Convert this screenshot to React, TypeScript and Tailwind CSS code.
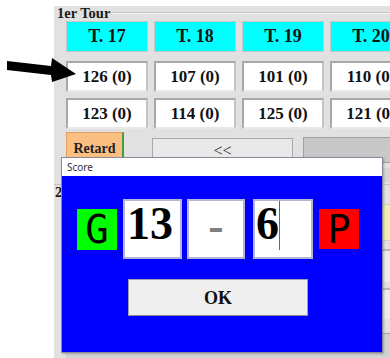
import React from "react";

const serif = "font-['Liberation_Serif','Times_New_Roman',serif]";

function HeadCell({ label }: { label: string }) {
  return (
    <div className="h-[31px] bg-[#00ffff] border border-[#c8c8c8] flex items-center justify-center text-[18px] font-bold text-[#111] leading-none">
      {label}
    </div>
  );
}

function ValCell({ label }: { label: string }) {
  return (
    <div className="h-[31px] bg-white border-2 border-t-[#a8a8a8] border-l-[#a8a8a8] border-r-[#c4c4c4] border-b-[#e8e8e8] flex items-center justify-center text-[17px] font-bold text-[#111] leading-none">
      {label}
    </div>
  );
}

export default function App() {
  const heads = ["T. 17", "T. 18", "T. 19", "T. 20"];
  const row1 = ["126 (0)", "107 (0)", "101 (0)", "110 (0)"];
  const row2 = ["123 (0)", "114 (0)", "125 (0)", "121 (0)"];
  return (
    <div className={`relative w-[390px] h-[358px] overflow-hidden bg-white ${serif}`}>
      <div className="flex h-full">
        <div className="w-[54px] shrink-0" />
        <div className="flex-1 min-w-0 mt-[6px] bg-[#e1e1e1] overflow-hidden flex flex-col">
          {/* 1er Tour legend */}
          <div className="flex items-center h-[16px]">
            <span className="pl-[3px] text-[14.5px] font-bold text-[#1a1a1a] leading-none">1er Tour</span>
            <div className="flex-1 ml-[2px] border-t border-[#c6c6c6] border-b border-b-[#f4f4f4]" />
          </div>
          <div className="pl-[12px] flex flex-col">
            <div className="grid grid-cols-[82px_82px_82px_82px] gap-x-[6px] w-max">
              {heads.map((h) => (
                <HeadCell key={h} label={h} />
              ))}
            </div>
            <div className="grid grid-cols-[82px_82px_82px_82px] gap-x-[6px] w-max mt-[9px]">
              {row1.map((h) => (
                <ValCell key={h} label={h} />
              ))}
            </div>
            <div className="grid grid-cols-[82px_82px_82px_82px] gap-x-[6px] w-max mt-[6px]">
              {row2.map((h) => (
                <ValCell key={h} label={h} />
              ))}
            </div>
            {/* buttons row */}
            <div className="flex items-start mt-[3px] w-max">
              <div className="w-[58px] h-[30px] bg-[#fbbf82] border border-[#e0a060] border-r-2 border-r-[#3f9f3f] flex items-start justify-center pt-[9px] text-[14px] font-bold text-[#222] leading-none">
                Retard
              </div>
              <div className="ml-[28px] mt-[6px] w-[141px] h-[26px] bg-[#e9e9e9] border border-[#a9a9a9] flex items-start justify-center pt-[4px] text-[16px] text-[#333] leading-none">
                &lt;&lt;
              </div>
              <div className="ml-[10px] mt-[5px] w-[120px] h-[26px] bg-[#c8c8c8] border border-[#a0a0a0]" />
            </div>
            <div className="mt-[4px] w-[400px] h-[14px] bg-[#d6d6d6]" />
          </div>
          {/* 2eme Tour */}
          <div className="flex items-center h-[16px] mt-[2px] border-t border-[#c6c6c6]">
            <span className="pl-[1px] text-[14.5px] font-bold text-[#1a1a1a] leading-none">2ème Tour</span>
          </div>
          <div className="pl-[12px] flex flex-col">
            <div className="grid grid-cols-[82px_82px_82px_82px] gap-x-[6px] w-max mt-[5px]">
              {heads.map((h) => (
                <div key={h} className="h-[37px] bg-[#f0eeb4] border border-[#d0d0c0]" />
              ))}
            </div>
            <div className="grid grid-cols-[82px_82px_82px_82px] gap-x-[6px] w-max mt-[8px]">
              {heads.map((h) => (
                <div key={h} className="h-[33px] bg-[#ececec] border-t-2 border-[#b8b8b8]" />
              ))}
            </div>
            <div className="grid grid-cols-[82px_82px_82px_82px] gap-x-[6px] w-max mt-[6px]">
              {heads.map((h) => (
                <div key={h} className="h-[31px] bg-[#ececec] border-t-2 border-[#b8b8b8]" />
              ))}
            </div>
            <div className="mt-[14px] w-[400px] border-t border-[#a8a8a8] h-[40px] bg-[#d2d2d2]" />
          </div>
        </div>
      </div>

      {/* annotation arrow */}
      <svg className="absolute left-0 top-0" width="90" height="100" viewBox="0 0 90 100">
        <polygon points="7,61 51,66 52,58 76,74 52,82 51,75 7,70" fill="#000" />
      </svg>

      {/* Score dialog */}
      <div className="absolute left-[61px] top-[157px] w-[322px] h-[196px] border border-[#8a8a9a] flex flex-col shadow-[1px_1px_2px_rgba(0,0,0,0.25)]">
        <div className="h-[18px] bg-white flex items-center pl-[5px] font-['Noto_Sans','Open_Sans',sans-serif] text-[10px] text-[#333] leading-none">
          Score
        </div>
        <div className="flex-1 bg-[#0000ff] flex flex-col">
          <div className="flex items-center mt-[23px] pl-[15px]">
            <div className="w-[40px] h-[41px] bg-[#00ff00] flex items-center justify-center font-['DejaVu_Sans_Mono','Liberation_Mono',monospace] text-[39px] text-black leading-none">
              G
            </div>
            <div className="ml-[6px] w-[59px] h-[60px] bg-white border-2 border-[#b4b4d4] pl-[2px] text-[46px] font-bold text-black leading-none">
              13
            </div>
            <div className="ml-[5px] w-[58px] h-[60px] bg-white border-2 border-[#b4b4d4] flex items-center justify-center pb-[6px] text-[46px] font-bold text-[#808080] leading-none">
              -
            </div>
            <div className="ml-[8px] w-[60px] h-[60px] bg-white border-2 border-[#b4b4d4] pl-[1px] flex items-start text-[46px] font-bold text-black leading-none">
              <span>6</span>
              <div className="ml-[0px] w-px h-[49px] bg-[#666]" />
            </div>
            <div className="ml-[6px] w-[40px] h-[40px] bg-[#ff0000] flex items-center justify-center font-['DejaVu_Sans_Mono','Liberation_Mono',monospace] text-[39px] text-black leading-none">
              P
            </div>
          </div>
          <div className="ml-[66px] mt-[20px] w-[180px] h-[37px] bg-[#efefef] border border-[#a0a0a0] border-b-[#8a8a8a] flex items-center justify-center text-[18px] font-bold text-[#111] leading-none">
            OK
          </div>
        </div>
      </div>
    </div>
  );
}
